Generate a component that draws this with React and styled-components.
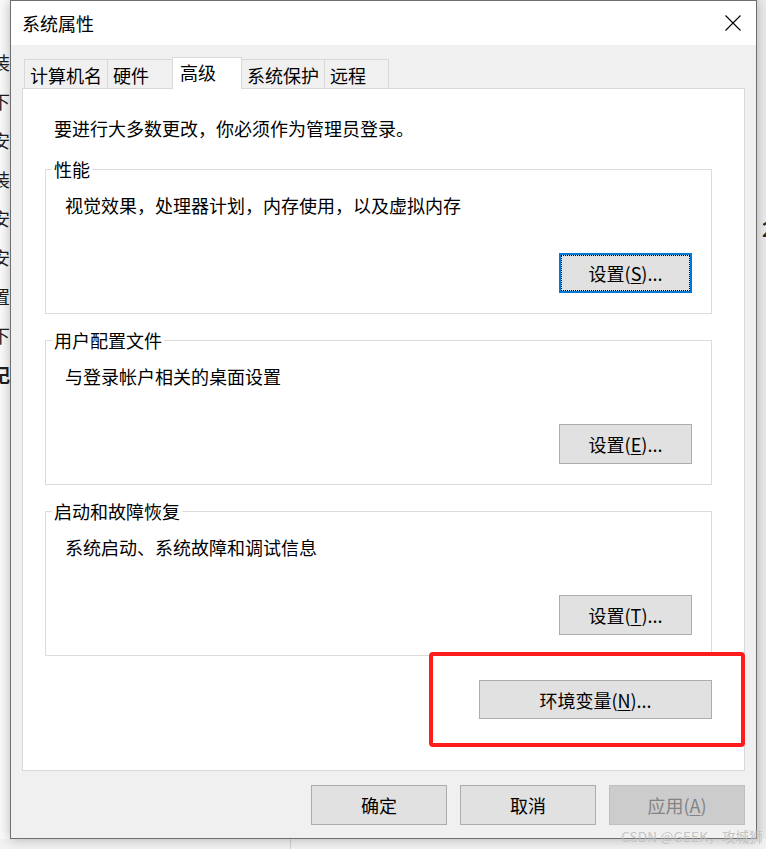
import React from "react";
import styled, { createGlobalStyle } from "styled-components";

const font = `"Noto Sans CJK SC", "Microsoft YaHei", "Noto Sans", sans-serif`;

const GlobalStyle = createGlobalStyle`
  html, body {
    margin: 0;
    padding: 0;
    background: #f0f0f0;
  }
  * {
    box-sizing: border-box;
  }
`;

const Desktop = styled.div`
  position: relative;
  width: 766px;
  height: 849px;
  overflow: hidden;
  display: flex;
  flex-direction: column;
  font-family: ${font};
  color: #000;
`;

const Row = styled.div`
  display: flex;
  height: 839px;
  flex: none;
`;

const BehindLeft = styled.div`
  width: 10px;
  flex: none;
  overflow: hidden;
  background: #fbfbfb;
  padding-top: 43px;
`;

const BehindGlyph = styled.span`
  display: block;
  width: 18px;
  margin-left: -8px;
  font-size: 18px;
  line-height: 39px;
  color: #1e1e1e;
  font-weight: ${(p) => (p.$bold ? 700 : 400)};
`;

const BehindRight = styled.div`
  flex: 1;
  overflow: hidden;
  background: #ededed;
  padding-top: 214px;
  padding-left: 5px;
  font-size: 20px;
  font-weight: 700;
  line-height: 30px;
  color: #2a2a2a;
`;

const BehindBottom = styled.div`
  flex: 1;
  display: flex;
  background: #f2f2f2;
`;

const BottomPane = styled.div`
  width: 291px;
  border-right: 1px solid #d2d2d2;
`;

const Dialog = styled.div`
  position: relative;
  z-index: 1;
  width: 747px;
  height: 839px;
  flex: none;
  display: flex;
  flex-direction: column;
  border: 1px solid #6f6f6f;
  background: #f0f0f0;
  box-shadow: 0 0 12px rgba(0, 0, 0, 0.28);
`;

const TitleBar = styled.div`
  height: 44px;
  flex: none;
  display: flex;
  align-items: center;
  justify-content: space-between;
  background: #fff;
  padding-left: 11px;
`;

const Title = styled.span`
  font-size: 18px;
  line-height: 44px;
`;

const CloseButton = styled.div`
  width: 46px;
  height: 44px;
  display: flex;
  align-items: center;
  justify-content: center;
`;

const Body = styled.div`
  flex: 1;
  display: flex;
  flex-direction: column;
  padding: 12px 11px 13px 11px;
`;

const TabList = styled.div`
  display: flex;
  align-items: flex-end;
  height: 31px;
  margin-left: 2px;
`;

const Tab = styled.div`
  position: relative;
  width: ${(p) => p.$width}px;
  height: ${(p) => (p.$active ? 32 : 29)}px;
  margin-bottom: ${(p) => (p.$active ? -1 : 0)}px;
  z-index: ${(p) => (p.$active ? 2 : 1)};
  border: 1px solid #d9d9d9;
  border-bottom: none;
  background: ${(p) => (p.$active ? "#fff" : "#f0f0f0")};
  padding: ${(p) => (p.$active ? "2px 0 0 7px" : "3px 0 0 5px")};
  font-size: 18px;
  line-height: 24px;
  white-space: nowrap;
  & + & {
    margin-left: -1px;
  }
`;

const Panel = styled.div`
  position: relative;
  height: 683px;
  flex: none;
  border: 1px solid #d9d9d9;
  background: #fff;
  padding: 0 32px 0 22px;
`;

const Intro = styled.div`
  margin: 27px 0 17px 9px;
  font-size: 18px;
  line-height: 24px;
`;

const Group = styled.fieldset`
  margin: 0;
  padding: 0;
  min-width: 0;
  border: 1px solid #dcdcdc;
  & + & {
    margin-top: 14px;
  }
`;

const Legend = styled.legend`
  margin-left: 6px;
  padding: 0 2px;
  font-size: 18px;
  line-height: 24px;
`;

const GroupBody = styled.div`
  display: flex;
  flex-direction: column;
  padding: 12px 19px 20px 19px;
`;

const Desc = styled.div`
  font-size: 18px;
  line-height: 24px;
`;

const ButtonRow = styled.div`
  display: flex;
  justify-content: flex-end;
  margin-top: ${(p) => p.$top || 0}px;
`;

const Button = styled.button`
  width: ${(p) => p.$width}px;
  height: ${(p) => p.$height || 40}px;
  padding: 0;
  font-family: ${font};
  font-size: 18px;
  line-height: 24px;
  color: ${(p) => (p.$disabled ? "#838383" : "#000")};
  background: ${(p) => (p.$disabled ? "#cccccc" : "#e1e1e1")};
  border: ${(p) =>
    p.$focused ? "2px solid #0078d7" : p.$disabled ? "1px solid #bfbfbf" : "1px solid #adadad"};
  outline: ${(p) => (p.$focused ? "1px dotted #000" : "none")};
  outline-offset: -3px;
  u {
    text-underline-offset: 2px;
  }
`;

const Highlight = styled.div`
  position: absolute;
  left: 406px;
  top: 563px;
  width: 316px;
  height: 95px;
  border: 4px solid #ff1c1c;
  border-radius: 4px;
  pointer-events: none;
`;

const Footer = styled.div`
  display: flex;
  justify-content: flex-end;
  gap: 13px;
  margin-top: 14px;
`;

const Watermark = styled.div`
  position: absolute;
  right: 3px;
  bottom: 5px;
  z-index: 3;
  font-family: ${font};
  font-size: 13.5px;
  line-height: 16px;
  color: rgba(190, 190, 190, 0.9);
  letter-spacing: 0.2px;
`;

const behindChars = ["装", "下", "安", "装", "安", "安", "置", "下", "记"];

const tabs = [
  { label: "计算机名", width: 84 },
  { label: "硬件", width: 66 },
  { label: "高级", width: 70, active: true },
  { label: "系统保护", width: 84 },
  { label: "远程", width: 65 },
];

const groups = [
  { legend: "性能", desc: "视觉效果，处理器计划，内存使用，以及虚拟内存", key: "S", focused: true },
  { legend: "用户配置文件", desc: "与登录帐户相关的桌面设置", key: "E" },
  { legend: "启动和故障恢复", desc: "系统启动、系统故障和调试信息", key: "T" },
];

function CloseIcon() {
  return (
    <svg width="16" height="16" viewBox="0 0 16 16">
      <path d="M0.5 0.5 L15.5 15.5 M15.5 0.5 L0.5 15.5" stroke="#000" strokeWidth="1.1" fill="none" />
    </svg>
  );
}

export default function App() {
  return (
    <>
      <GlobalStyle />
      <Desktop>
        <Row>
          <BehindLeft>
            {behindChars.map((c, i) => (
              <BehindGlyph key={i} $bold={i === behindChars.length - 1}>
                {c}
              </BehindGlyph>
            ))}
          </BehindLeft>
          <Dialog>
            <TitleBar>
              <Title>系统属性</Title>
              <CloseButton>
                <CloseIcon />
              </CloseButton>
            </TitleBar>
            <Body>
              <TabList>
                {tabs.map((t) => (
                  <Tab key={t.label} $width={t.width} $active={t.active}>
                    {t.label}
                  </Tab>
                ))}
              </TabList>
              <Panel>
                <Intro>要进行大多数更改，你必须作为管理员登录。</Intro>
                {groups.map((g) => (
                  <Group key={g.legend}>
                    <Legend>{g.legend}</Legend>
                    <GroupBody>
                      <Desc>{g.desc}</Desc>
                      <ButtonRow $top={36}>
                        <Button $width={133} $focused={g.focused}>
                          设置(<u>{g.key}</u>)...
                        </Button>
                      </ButtonRow>
                    </GroupBody>
                  </Group>
                ))}
                <ButtonRow $top={24}>
                  <Button $width={233} $height={39}>
                    环境变量(<u>N</u>)...
                  </Button>
                </ButtonRow>
                <Highlight />
              </Panel>
              <Footer>
                <Button $width={136}>确定</Button>
                <Button $width={136}>取消</Button>
                <Button $width={136} $disabled>
                  应用(<u>A</u>)
                </Button>
              </Footer>
            </Body>
          </Dialog>
          <BehindRight>2</BehindRight>
        </Row>
        <BehindBottom>
          <BottomPane />
        </BehindBottom>
        <Watermark>CSDN @GEEK，攻城狮</Watermark>
      </Desktop>
    </>
  );
}
